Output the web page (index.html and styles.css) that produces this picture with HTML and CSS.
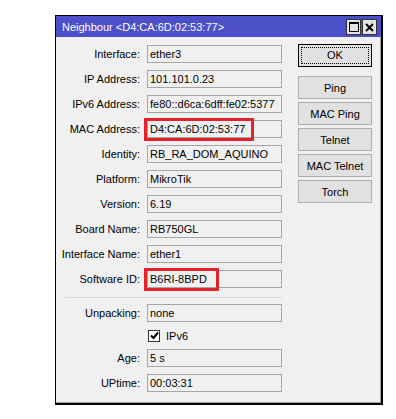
FILE: index.html
```html
<!DOCTYPE html>
<html lang="en">
  <head>
    <meta charset="UTF-8" />
    <title>Neighbour</title>
    <link rel="stylesheet" href="styles.css">
  </head>
  <body>
    <div class="window">
      <div class="titlebar">
        <span class="title">Neighbour &lt;D4:CA:6D:02:53:77&gt;</span>
        <div class="title-btns">
          <span class="tbtn">
            <svg width="10" height="10" viewBox="0 0 10 10"><rect x="0.5" y="0.5" width="9" height="9" fill="none" stroke="#000" /><rect x="0" y="0" width="10" height="2" fill="#000" /></svg>
          </span>
          <span class="tbtn">
            <svg width="9" height="9" viewBox="0 0 9 9"><path d="M1 1 L8 8 M8 1 L1 8" stroke="#000" stroke-width="2" /></svg>
          </span>
        </div>
      </div>

      <div class="content">
        <div class="form">
          <div class="row"><label>Interface:</label><div class="field">ether3</div></div>
          <div class="row"><label>IP Address:</label><div class="field">101.101.0.23</div></div>
          <div class="row"><label>IPv6 Address:</label><div class="field">fe80::d6ca:6dff:fe02:5377</div></div>
          <div class="row">
            <label>MAC Address:</label>
            <div class="field">D4:CA:6D:02:53:77<span class="mark mark-mac"></span></div>
          </div>
          <div class="row"><label>Identity:</label><div class="field">RB_RA_DOM_AQUINO</div></div>
          <div class="row"><label>Platform:</label><div class="field">MikroTik</div></div>
          <div class="row"><label>Version:</label><div class="field">6.19</div></div>
          <div class="row"><label>Board Name:</label><div class="field">RB750GL</div></div>
          <div class="row"><label>Interface Name:</label><div class="field">ether1</div></div>
          <div class="row">
            <label>Software ID:</label>
            <div class="field">B6RI-8BPD<span class="mark mark-sid"></span></div>
          </div>

          <div class="separator"></div>

          <div class="row"><label>Unpacking:</label><div class="field">none</div></div>
          <div class="row row-check">
            <label></label>
            <div class="check">
              <span class="box">
                <svg width="9" height="9" viewBox="0 0 9 9"><path d="M1 4.5 L3.5 7 L8 1.5" fill="none" stroke="#000" stroke-width="2" /></svg>
              </span>
              <span>IPv6</span>
            </div>
          </div>
          <div class="row"><label>Age:</label><div class="field">5 s</div></div>
          <div class="row"><label>UPtime:</label><div class="field">00:03:31</div></div>
        </div>

        <div class="actions">
          <button class="btn btn-ok"><span>OK</span></button>
          <div class="btn-group">
            <button class="btn">Ping</button>
            <button class="btn">MAC Ping</button>
            <button class="btn">Telnet</button>
            <button class="btn">MAC Telnet</button>
            <button class="btn">Torch</button>
          </div>
        </div>
      </div>
    </div>
  </body>
</html>
```

FILE: styles.css
```css
body {
  margin: 0;
  background-color: #fff;
  font-family: "Liberation Sans", Arial, sans-serif;
  font-size: 11px;
  color: #000;
}

.window {
  box-sizing: border-box;
  width: 328px;
  height: 390px;
  margin: 15px 0 0 55px;
  background-color: #f0f0f0;
  border-top: 1px solid #000;
  border-left: 1px solid #000;
  border-right: 2px solid #000;
  border-bottom: 2px solid #000;
  box-shadow: inset -1px -1px 0 #a0a0a0;
}

.titlebar {
  height: 21px;
  background-color: #4b50c8;
  display: flex;
  align-items: center;
  justify-content: space-between;
  padding: 0 4px 0 6px;
}

.title {
  color: #fff;
  font-size: 11px;
}

.title-btns {
  display: flex;
  gap: 1px;
  margin-top: 1px;
}

.tbtn {
  box-sizing: border-box;
  width: 15px;
  height: 16px;
  background-color: #e4e4e4;
  border: 1px solid #333;
  display: flex;
  align-items: center;
  justify-content: center;
}

.content {
  display: flex;
  padding: 7px 9px 0 0;
}

.form {
  display: flex;
  flex-direction: column;
  gap: 7px;
  padding-top: 1px;
}

.row {
  display: flex;
  align-items: center;
  height: 18px;
}

.row label {
  width: 84px;
  margin-right: 7px;
  text-align: right;
  white-space: nowrap;
}

.field {
  position: relative;
  box-sizing: border-box;
  width: 135px;
  height: 18px;
  line-height: 16px;
  padding: 0 2px;
  border: 1px solid #a5a5a5;
  background-color: #f0f0f0;
  white-space: nowrap;
}

.mark {
  position: absolute;
  top: -3px;
  left: -4px;
  height: 23px;
  box-sizing: border-box;
  border: 3px solid #e3222b;
}

.mark-mac {
  width: 110px;
}

.mark-sid {
  width: 75px;
}

.separator {
  height: 1px;
  margin: 2px 0 -1px 9px;
  width: 217px;
  background-color: #d7d7d7;
}

.row-check {
  height: 13px;
}

.check {
  display: flex;
  align-items: center;
  gap: 6px;
  margin-left: 1px;
}

.check .box {
  box-sizing: border-box;
  width: 12px;
  height: 12px;
  border: 1px solid #333;
  background-color: #fff;
  display: flex;
  align-items: center;
  justify-content: center;
}

.actions {
  margin-left: 16px;
  display: flex;
  flex-direction: column;
}

.btn {
  box-sizing: border-box;
  width: 74px;
  height: 23px;
  padding: 0;
  font-family: "Liberation Sans", Arial, sans-serif;
  font-size: 11px;
  color: #000;
  background-color: #e1e1e1;
  border: 1px solid #adadad;
}

.btn-ok {
  border: 1px solid #000;
  display: flex;
  align-items: center;
  justify-content: center;
}

.btn-ok span {
  box-sizing: border-box;
  width: 68px;
  height: 17px;
  line-height: 15px;
  border: 1px dotted #000;
}

.btn-group {
  display: flex;
  flex-direction: column;
  gap: 3px;
  margin-top: 9px;
}
```
